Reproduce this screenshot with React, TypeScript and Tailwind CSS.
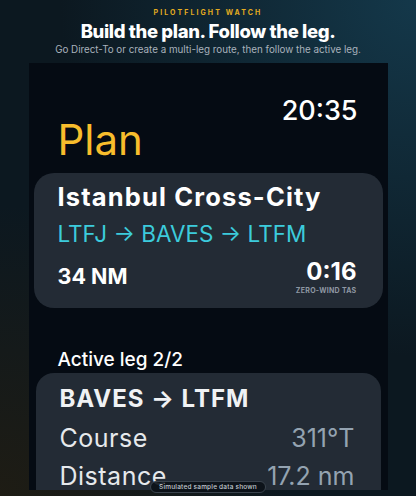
export default function App() {
  return (
    <div
      className="relative w-[416px] h-[496px] overflow-hidden bg-[#0c1820] text-white"
      style={{ fontFamily: 'Inter, "Noto Sans", sans-serif' }}
    >
      {/* backdrop glow */}
      <div className="absolute inset-0 bg-[radial-gradient(circle_at_100%_0%,#14384a_0%,transparent_55%)]" />
      <div className="absolute inset-0 bg-[radial-gradient(circle_at_0%_100%,#1e1c14_0%,transparent_45%)]" />

      <div className="relative flex flex-col items-center">
        {/* Header */}
        <p className="mt-[8px] text-[7px] leading-[9px] font-bold tracking-[0.3em] text-[#e5ac1f]">PILOTFLIGHT WATCH</p>
        <h1 className="mt-[2px] text-[18.5px] leading-[24px] font-extrabold tracking-[-0.02em]">Build the plan. Follow the leg.</h1>
        <p className="mt-[1px] text-[9.8px] leading-[12px] text-[#a9b2bc]">
          Go Direct-To or create a multi-leg route, then follow the active leg.
        </p>

        {/* Watch screen */}
        <div className="mt-[7px] w-[359px] h-[427px] bg-[#050b13] overflow-hidden flex flex-col">
          <div className="flex justify-end pr-[30px] pt-[34px]">
            <span className="text-[27px] leading-[27px] font-medium">20:35</span>
          </div>
          <div className="pl-[29px] mt-[-8px] text-[42px] leading-[48px] text-[#f8bd2c]">Plan</div>

          {/* Plan card */}
          <div className="mx-[5px] mt-[9px] rounded-[20px] bg-[#232b35] pl-[24px] pr-[26px] pt-[9px] pb-[13px]">
            <div className="text-[25.5px] leading-[30px] font-bold tracking-[0.045em]">Istanbul Cross-City</div>
            <div className="mt-[9px] text-[22.5px] leading-[26px] text-[#3ccbdc]">LTFJ → BAVES → LTFM</div>
            <div className="mt-[12px] flex items-end justify-between">
              <span className="text-[21.5px] leading-[26px] font-bold mb-[6px]">34 NM</span>
              <div className="flex flex-col items-end">
                <span className="text-[24px] leading-[26px] font-bold">0:16</span>
                <span className="mt-[1px] text-[7px] leading-[9px] font-bold tracking-[0.04em] text-[#8f98a3]">ZERO-WIND TAS</span>
              </div>
            </div>
          </div>

          <div className="pl-[29px] mt-[40px] text-[19px] leading-[24px] font-medium">Active leg 2/2</div>

          {/* Active leg card */}
          <div className="mx-[7px] mt-[1px] rounded-t-[18px] bg-[#232b35] pl-[24px] pr-[26px] pt-[12px] flex-1">
            <div className="text-[24px] leading-[28px] font-bold tracking-[0.04em] text-[#f0f2f4]">BAVES → LTFM</div>
            <div className="mt-[6px] flex justify-between text-[25px] leading-[38px]">
              <span className="text-[#e6e9ec] tracking-[0.02em]">Course</span>
              <span className="text-[#94a3b1]">311°T</span>
            </div>
            <div className="flex justify-between text-[25px] leading-[38px]">
              <span className="text-[#e6e9ec] tracking-[0.02em]">Distance</span>
              <span className="text-[#94a3b1]">17.2 nm</span>
            </div>
          </div>
        </div>
      </div>

      {/* sample-data note */}
      <div className="absolute left-1/2 bottom-[3px] -translate-x-1/2 rounded-full border border-[#3a434d] bg-[#0b1117]/90 px-[8px] py-[1px] text-[6.5px] leading-[8px] font-medium tracking-[0.03em] text-[#c4cbd2]">
        Simulated sample data shown
      </div>
    </div>
  );
}
